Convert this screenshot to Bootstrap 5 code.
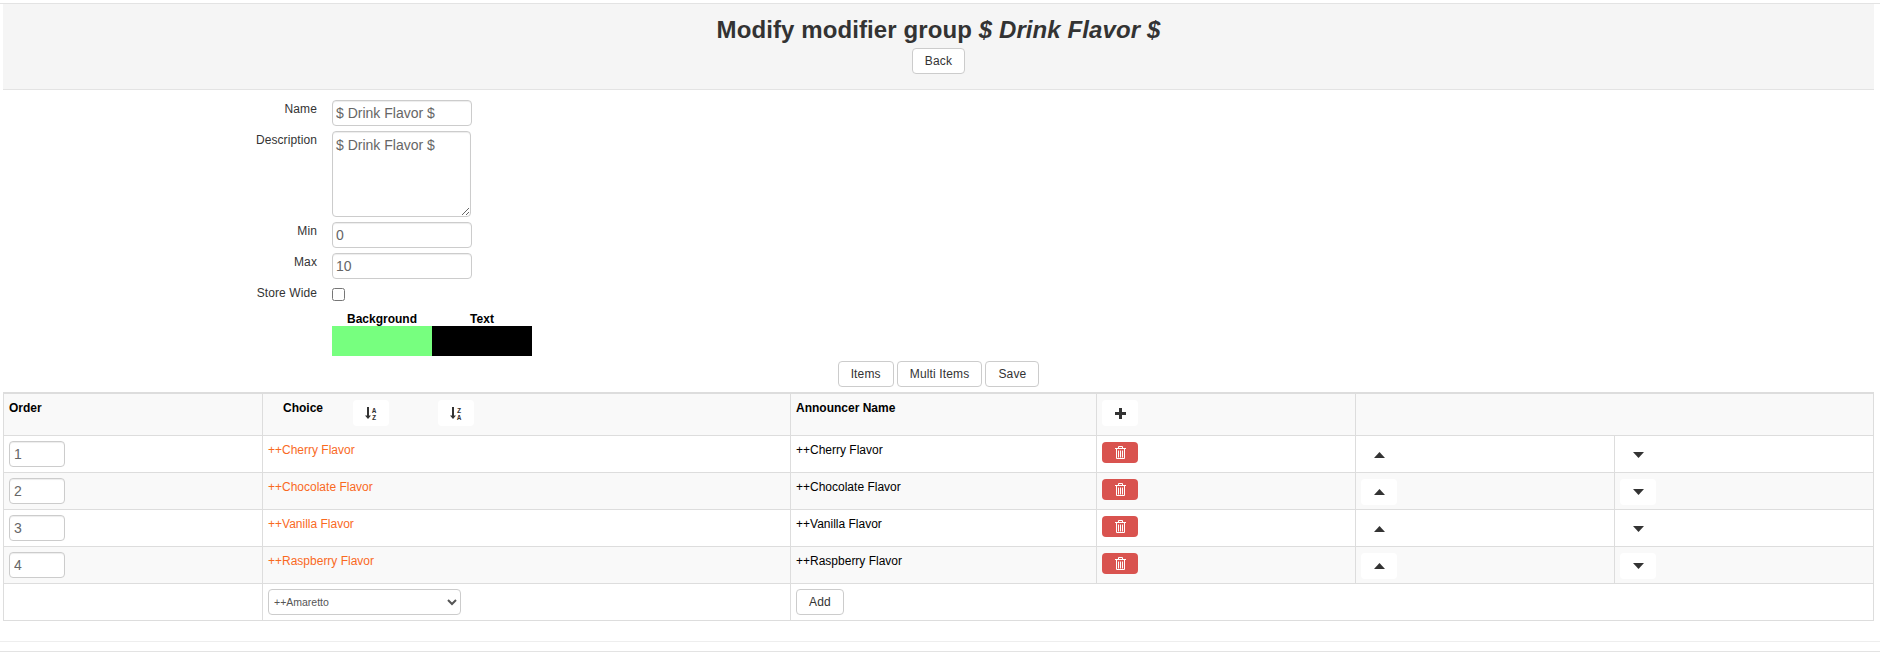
<!DOCTYPE html>
<html lang="en">
<head>
  <meta charset="UTF-8">
  <title>Modify modifier group</title>
  <link rel="stylesheet" href="https://cdn.jsdelivr.net/npm/bootstrap@5.3.0/dist/css/bootstrap.min.css">
  <style>
    body {
      font-family: "Liberation Sans", Arial, sans-serif;
      font-size: 12px;
      line-height: 17px;
      color: #333;
      background: #fff;
      overflow: hidden;
    }
    .top-line {
      height: 4px;
      border-bottom: 1px solid #e3e3e3;
    }
    .page-head {
      margin: 0 6px 10px 3px;
      height: 86px;
      background: #f5f5f5;
      border-bottom: 1px solid #e3e3e3;
      text-align: center;
      padding-top: 11px;
    }
    .page-head h1 {
      font-size: 24px;
      line-height: 30px;
      font-weight: 700;
      margin: 0 0 3px;
      letter-spacing: .1px;
      color: #333;
    }
    .page-head em { font-weight: 700; }
    .btn-plain {
      display: inline-block;
      height: 26px;
      padding: 3px 12px;
      font-size: 12px;
      line-height: 18px;
      color: #333;
      background: #fff;
      border: 1px solid #ccc;
      border-radius: 4px;
      letter-spacing: .15px;
    }
    .form-rows { padding-left: 3px; }
    .form-line {
      display: flex;
      margin-bottom: 5px;
    }
    .line-label {
      width: 314px;
      margin: 0 15px 0 0;
      padding-top: 1px;
      text-align: right;
      line-height: 16px;
      letter-spacing: .1px;
    }
    .line-input {
      width: 140px;
      height: 26px;
      padding: 3px;
      font-size: 14px;
      line-height: 20px;
      color: #666;
      border: 1px solid #ccc;
      border-radius: 4px;
      box-shadow: inset 0 1px 1px rgba(0,0,0,.075);
      outline: 0;
    }
    textarea.line-input {
      width: 139px;
      height: 86px;
      display: block;
    }
    .line-check {
      width: 13px;
      height: 13px;
      margin: 4px 0 0;
    }
    .colour-head {
      display: flex;
      margin-left: 329px;
      margin-top: 11px;
      font-weight: 700;
      color: #000;
      line-height: 14px;
    }
    .colour-head span {
      width: 100px;
      text-align: center;
    }
    .colour-swatches {
      display: flex;
      margin-left: 329px;
    }
    .swatch-bg, .swatch-fg {
      width: 100px;
      height: 30px;
    }
    .swatch-bg { background: #77ff7f; }
    .swatch-fg { background: #000; }
    .action-btns {
      display: flex;
      justify-content: center;
      gap: 3px;
      margin: 5px 3px 5px 0;
    }
    .choices {
      width: 1870px;
      margin: 0 0 0 3px;
      table-layout: fixed;
      border-collapse: collapse;
      --bs-table-striped-bg: #f9f9f9;
      --bs-table-border-color: #ddd;
      --bs-table-color: #000;
      --bs-table-striped-color: #000;
      border-color: #ddd;
    }
    .choices > tbody > tr > * {
      padding: 5px;
      vertical-align: top;
      font-size: 12px;
      line-height: 17px;
      border-width: 1px;
      border-color: #ddd;
    }
    .choices > tbody > tr > .cell-text { padding-top: 6px; }
    .choices > tbody > .head-row > th { border-top-width: 2px; }
    .choices th { color: #000; }
    .head-row { height: 42px; }
    .item-row { height: 37px; }
    .order-input {
      display: block;
      width: 56px;
      height: 26px;
      padding: 3px 4px;
      font-size: 14px;
      line-height: 20px;
      color: #666;
      border: 1px solid #ccc;
      border-radius: 4px;
      box-shadow: inset 0 1px 1px rgba(0,0,0,.075);
    }
    .choice-link {
      color: #f96a1f;
      text-decoration: none;
    }
    .choice-head {
      display: flex;
      align-items: flex-start;
    }
    .choice-title { margin: 1px 30px 0 15px; }
    .icon-btn {
      display: flex;
      align-items: center;
      justify-content: center;
      width: 36px;
      height: 26px;
      margin: 1px 0 -1px;
      padding: 0;
      background: #fff;
      border: 0;
      border-radius: 4px;
      color: #333;
    }
    .sort-second { margin-left: 49px; }
    .del-btn {
      display: flex;
      align-items: center;
      justify-content: center;
      width: 36px;
      height: 21px;
      margin-top: 1px;
      padding: 0;
      background: #d9534f;
      border: 0;
      border-radius: 4px;
    }
    .amount-select {
      display: block;
      width: 193px;
      height: 26px;
      padding: 0 0 0 1px;
      font-size: 10.5px;
      color: #555;
      background: #fff;
      border: 1px solid #ccc;
      border-radius: 4px;
    }
    .sort-letters {
      font-family: "Liberation Mono", monospace;
      font-size: 7px;
      font-weight: 700;
      fill: #333;
    }
    .page-rule {
      margin: 20px 0 0;
      border: 0;
      border-top: 1px solid #eee;
      opacity: 1;
    }
    .foot-rule {
      margin: 9px 0 0;
      border: 0;
      border-top: 1px solid #e3e3e3;
      opacity: 1;
    }
  </style>
</head>
<body>
  <div class="top-line"></div>
  <div class="page-head">
    <h1>Modify modifier group <em>$ Drink Flavor $</em></h1>
    <button type="button" class="btn-plain">Back</button>
  </div>

  <form class="form-rows">
    <div class="form-line">
      <label class="line-label">Name</label>
      <input class="line-input" type="text" value="$ Drink Flavor $">
    </div>
    <div class="form-line">
      <label class="line-label">Description</label>
      <textarea class="line-input">$ Drink Flavor $</textarea>
    </div>
    <div class="form-line">
      <label class="line-label">Min</label>
      <input class="line-input" type="text" value="0">
    </div>
    <div class="form-line">
      <label class="line-label">Max</label>
      <input class="line-input" type="text" value="10">
    </div>
    <div class="form-line">
      <label class="line-label">Store Wide</label>
      <input class="line-check" type="checkbox">
    </div>
    <div class="colour-head"><span>Background</span><span>Text</span></div>
    <div class="colour-swatches"><div class="swatch-bg"></div><div class="swatch-fg"></div></div>
  </form>

  <div class="action-btns">
    <button type="button" class="btn-plain">Items</button>
    <button type="button" class="btn-plain">Multi Items</button>
    <button type="button" class="btn-plain">Save</button>
  </div>

  <table class="table table-bordered table-striped choices">
    <colgroup>
      <col style="width:259px"><col style="width:528px"><col style="width:306px"><col style="width:259px"><col style="width:259px"><col style="width:259px">
    </colgroup>
    <tbody id="choice-body">
      <tr class="head-row">
        <th class="cell-text">Order</th>
        <th>
          <div class="choice-head">
            <span class="choice-title">Choice</span>
            <button type="button" class="icon-btn" aria-label="Sort A to Z">
              <svg width="12" height="13" viewBox="0 0 12 13"><path d="M2 0h2v8.5h2L3 12 0 8.5h2z" fill="#333"/><text class="sort-letters" x="7" y="5.5">A</text><text class="sort-letters" x="7" y="12.5">Z</text></svg>
            </button>
            <button type="button" class="icon-btn sort-second" aria-label="Sort Z to A">
              <svg width="12" height="13" viewBox="0 0 12 13"><path d="M2 0h2v8.5h2L3 12 0 8.5h2z" fill="#333"/><text class="sort-letters" x="7" y="5.5">Z</text><text class="sort-letters" x="7" y="12.5">A</text></svg>
            </button>
          </div>
        </th>
        <th class="cell-text">Announcer Name</th>
        <th>
          <button type="button" class="icon-btn" aria-label="Add">
            <svg width="11" height="11" viewBox="0 0 11 11"><path d="M4 0h3v4h4v3H7v4H4V7H0V4h4z" fill="#333"/></svg>
          </button>
        </th>
        <th colspan="2"></th>
      </tr>
      <tr>
        <td></td>
        <td>
          <select class="amount-select"><option>++Amaretto</option></select>
        </td>
        <td colspan="4"><button type="button" class="btn-plain">Add</button></td>
      </tr>
    </tbody>
  </table>

  <hr class="page-rule">
  <hr class="foot-rule">

  <script src="https://cdn.jsdelivr.net/npm/bootstrap@5.3.0/dist/js/bootstrap.bundle.min.js"></script>
  <script>
    const items = ['++Cherry Flavor', '++Chocolate Flavor', '++Vanilla Flavor', '++Raspberry Flavor'];
    const trash = `<svg width="11" height="13" viewBox="0 0 11 13" fill="none" stroke="#fff"><path d="M3.5 2.5v-2h4v2M0 2.5h11M1.5 2.5v10h8v-10M3.5 4.5v7M5.5 4.5v7M7.5 4.5v7"/></svg>`;
    const up = `<svg width="11" height="6" viewBox="0 0 11 6"><path d="M5.5 0L11 6H0z" fill="#333"/></svg>`;
    const down = `<svg width="11" height="6" viewBox="0 0 11 6"><path d="M0 0h11L5.5 6z" fill="#333"/></svg>`;

    const body = document.getElementById('choice-body');
    const lastRow = body.lastElementChild;
    items.forEach((name, i) => {
      const tr = document.createElement('tr');
      tr.className = 'item-row';
      tr.innerHTML = `
        <td><input class="order-input" type="text" value="${i + 1}"></td>
        <td class="cell-text"><a class="choice-link" href="#">${name}</a></td>
        <td class="cell-text">${name}</td>
        <td><button type="button" class="del-btn" aria-label="Delete">${trash}</button></td>
        <td><button type="button" class="icon-btn" aria-label="Up">${up}</button></td>
        <td><button type="button" class="icon-btn" aria-label="Down">${down}</button></td>`;
      body.insertBefore(tr, lastRow);
    });
  </script>
</body>
</html>
